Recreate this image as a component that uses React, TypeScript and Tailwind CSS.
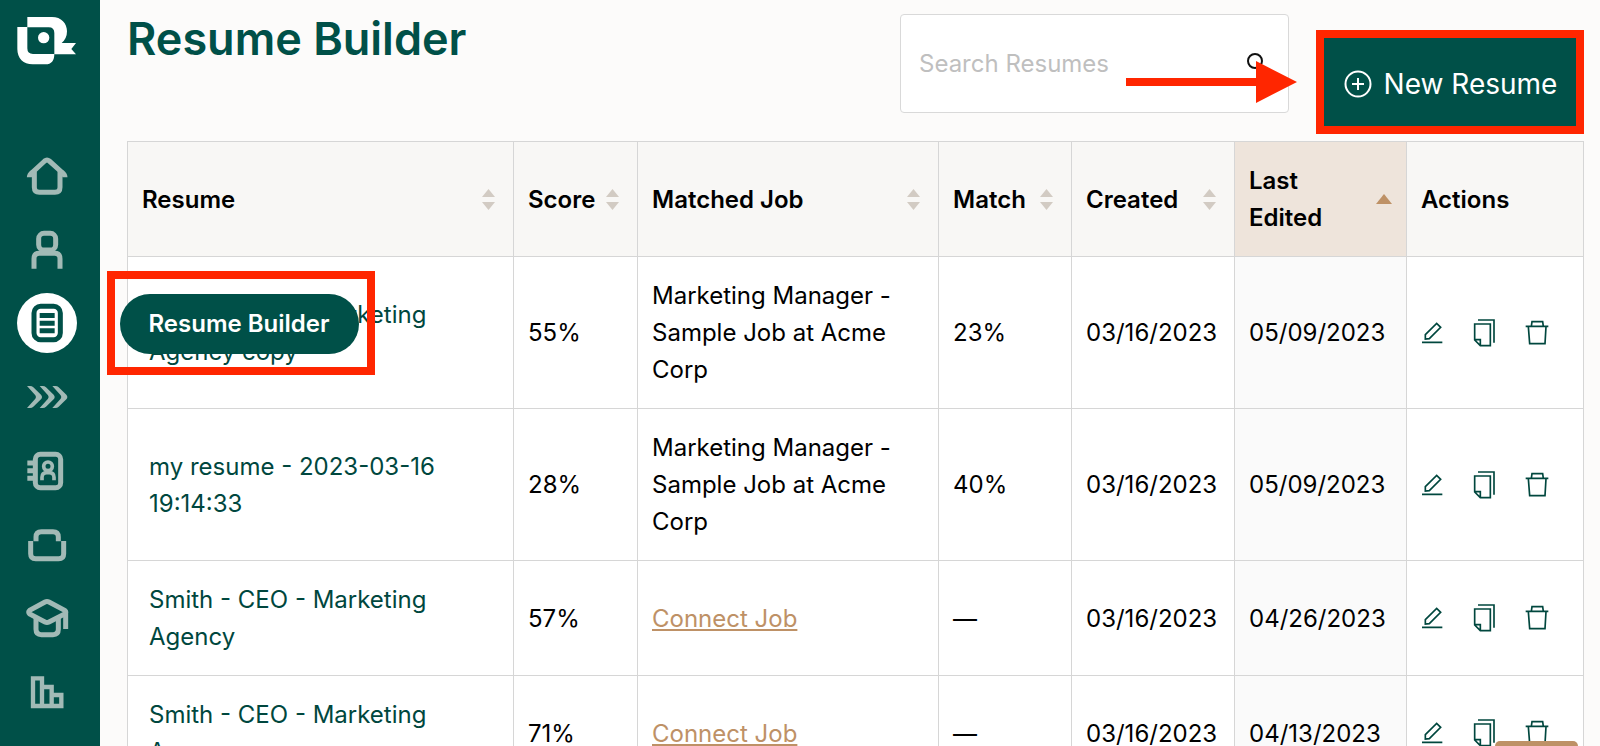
import * as React from "react";
import { clsx } from "clsx";

type Resume = {
  name: string;
  score: string;
  job?: string;
  match: string;
  created: string;
  edited: string;
};

const resumes: Resume[] = [
  {
    name: "Smith - CEO - Marketing Agency copy",
    score: "55%",
    job: "Marketing Manager - Sample Job at Acme Corp",
    match: "23%",
    created: "03/16/2023",
    edited: "05/09/2023",
  },
  {
    name: "my resume - 2023-03-16 19:14:33",
    score: "28%",
    job: "Marketing Manager - Sample Job at Acme Corp",
    match: "40%",
    created: "03/16/2023",
    edited: "05/09/2023",
  },
  {
    name: "Smith - CEO - Marketing Agency",
    score: "57%",
    match: "—",
    created: "03/16/2023",
    edited: "04/26/2023",
  },
  {
    name: "Smith - CEO - Marketing Agency",
    score: "71%",
    match: "—",
    created: "03/16/2023",
    edited: "04/13/2023",
  },
];

const columns = [
  { label: "Resume", width: "", sortable: true },
  { label: "Score", width: "w-[124px]", sortable: true },
  { label: "Matched Job", width: "w-[301px]", sortable: true },
  { label: "Match", width: "w-[133px]", sortable: true },
  { label: "Created", width: "w-[163px]", sortable: true },
  { label: "Last Edited", width: "w-[172px]", sortable: true, sorted: true },
  { label: "Actions", width: "w-[177px]", sortable: false },
];

const navItems = [
  {
    label: "Home",
    viewBox: "74 72 132 132",
    icon: (
      <>
        <path d="M87 142C87 134 92 130 97 126L133 93Q140 87 147 93L184 126C189 130 194 134 194 142" />
        <path d="M102 124V172Q102 187 117 187H164Q179 187 179 172V124" />
      </>
    ),
  },
  {
    label: "Profile",
    viewBox: "74 294 132 132",
    icon: (
      <>
        <rect x="115" y="310" width="51" height="50" rx="16" />
        <path d="M101 416V386Q101 370 117 370H163Q179 370 179 386V416" />
      </>
    ),
  },
  {
    label: "Resume Builder",
    viewBox: "74 517 132 132",
    active: true,
    icon: (
      <>
        <rect x="101" y="533" width="79" height="100" rx="20" />
        <path d="M118 560.500H163M118 583.500H163M118 606.500H163" />
      </>
    ),
  },
  {
    label: "Job Tracker",
    viewBox: "74 738 132 132",
    icon: (
      <g fill="currentColor" stroke="none">
        <path d="M80 771H89Q95 771 99 775L122 797Q128 804 122 811L99 833Q95 837 89 837H80L105 809Q109 804 105 799Z" />
        <path d="M118 771H127Q133 771 137 775L160 797Q166 804 160 811L137 833Q133 837 127 837H118L143 809Q147 804 143 799Z" />
        <path d="M156 771H165Q171 771 175 775L198 797Q204 804 198 811L175 833Q171 837 165 837H156L181 809Q185 804 181 799Z" />
      </g>
    ),
  },
  {
    label: "Contacts",
    viewBox: "74 59 132 132",
    icon: (
      <>
        <rect x="105" y="75" width="76" height="100" rx="15" />
        <path d="M81 101H98M81 124H98M81 147H98" />
        <circle cx="143" cy="111" r="13" strokeWidth="11" />
        <path d="M125 153V144Q125 130 139 130H147Q161 130 161 144V153" strokeWidth="11" />
      </>
    ),
  },
  {
    label: "Companies",
    viewBox: "74 276 132 132",
    icon: (
      <>
        <path d="M107 331V318Q107 302 123 302H158Q174 302 174 318V331" />
        <path d="M91 330V368Q91 383 106 383H175Q190 383 190 368V330" />
      </>
    ),
  },
  {
    label: "Courses",
    viewBox: "74 498 132 132",
    icon: (
      <>
        <path d="M134 516Q140 513 146 516L193 541Q200 546 193 552L146 576Q140 579 134 576L88 552Q82 546 88 541Z" />
        <path d="M196 547V597" />
        <path d="M107 562V598Q107 614 123 614H158Q174 614 174 598V562" />
      </>
    ),
  },
  {
    label: "Statistics",
    viewBox: "74 721 132 132",
    icon: (
      <path
        d="M98 746H125V829H98ZM125 772H154V829H125M154 796H183V829H154"
        strokeWidth="13"
      />
    ),
  },
];

function Logo() {
  return (
    <svg viewBox="51 46 180 150" className="h-[50px] w-[60px]" fill="#fff">
      <path d="M82 49H156C184 49 201 68 201 92C201 108 195 119 185 127H228L214 145L228 161H163V97Q163 80 146 80H82Z" />
      <path d="M52 79H82V143Q82 160 99 160H163C163 180 154 191 137 191H98C70 191 52 173 52 145Z" />
      <circle cx="131" cy="111" r="17" />
    </svg>
  );
}

function Sidebar() {
  return (
    <aside className="relative z-10 flex w-[100px] shrink-0 flex-col bg-[#005048] pr-[7px]">
      <a href="#" aria-label="Teal" className="mt-4 flex justify-center">
        <Logo />
      </a>
      <nav className="mt-20 flex h-[576px] shrink-0 flex-col items-center justify-between">
        {navItems.map((item) => (
          <a
            key={item.label}
            href="#"
            aria-label={item.label}
            className={clsx(
              "relative flex size-[60px] items-center justify-center rounded-full",
              item.active ? "bg-white text-[#005048]" : "text-[#a2bab6]",
            )}
          >
            <svg
              viewBox={item.viewBox}
              className="size-11"
              fill="none"
              stroke="currentColor"
              strokeWidth="15"
            >
              {item.icon}
            </svg>
            {item.active && (
              <span className="absolute top-1/2 left-[90px] flex w-[268px] -translate-y-1/2 border-8 border-[#ff2600] pt-[15px] pb-[13px] pl-[5px]">
                <span className="flex h-[60px] w-[239px] items-center justify-center rounded-full bg-[#005048] text-2xl font-semibold whitespace-nowrap text-white">
                  Resume Builder
                </span>
              </span>
            )}
          </a>
        ))}
      </nav>
    </aside>
  );
}

function SortIcon({ sorted }: { sorted?: boolean }) {
  if (sorted) {
    return (
      <svg viewBox="0 0 16 10" className="h-2.5 w-4 shrink-0" fill="#be9166">
        <path d="M8 0L16 10H0Z" />
      </svg>
    );
  }
  return (
    <svg viewBox="0 0 13 21" className="mr-1 h-[21px] w-[13px] shrink-0" fill="#d2cbc3">
      <path d="M6.500 0L13 8H0ZM0 13H13L6.500 21Z" />
    </svg>
  );
}

function RowActions() {
  return (
    <div className="flex items-center gap-7 text-[#00473e]">
      <button type="button" aria-label="Edit">
        <svg viewBox="665 600 72 72" className="size-6" fill="none" stroke="currentColor" strokeWidth="5">
          <path d="M668 664H729M678 654V641L712 607L724 619L690 653Z" />
        </svg>
      </button>
      <button type="button" aria-label="Duplicate">
        <svg viewBox="820 597 72 84" className="h-7 w-6" fill="none" stroke="currentColor" strokeWidth="5">
          <path d="M825 612H872V677H842L825 660ZM825 659H842V677M835 600H883V668" />
        </svg>
      </button>
      <button type="button" aria-label="Delete">
        <svg viewBox="978 600 72 78" className="h-[26px] w-6" fill="none" stroke="currentColor" strokeWidth="5">
          <path d="M980 619H1048M997 619L999 605H1031L1033 619M988 620L992 671H1038L1041 620" />
        </svg>
      </button>
    </div>
  );
}

function Header() {
  return (
    <header className="flex items-start pt-[14px] pb-3">
      <h1 className="flex-1 text-[45px] leading-[50px] font-semibold text-[#005048]">
        Resume Builder
      </h1>
      <div className="relative">
        <input
          type="search"
          aria-label="Search Resumes"
          placeholder="Search Resumes"
          className="h-[99px] w-[389px] rounded border border-[#d9d9d9] bg-white pr-16 pl-[18px] text-2xl placeholder:text-[#bfbfbf]"
        />
        <svg
          viewBox="0 0 20 20"
          className="absolute top-[39px] right-[22px] size-5"
          fill="none"
          stroke="#111"
          strokeWidth="2"
        >
          <circle cx="8" cy="8" r="7" />
          <path d="M13 13L18 18" />
        </svg>
        <svg
          viewBox="0 0 171 42"
          className="absolute top-[47px] left-[226px] h-[42px] w-[171px]"
          fill="#ff2600"
        >
          <path d="M0 17H130V0L171 21L130 42V25H0Z" />
        </svg>
      </div>
      <div className="relative mt-6 ml-8">
        <button
          type="button"
          className="flex h-[91px] w-[263px] items-center justify-center gap-3 bg-[#005048] pr-1 text-[28px] text-white"
        >
          <svg viewBox="0 0 28 28" className="size-7" fill="none" stroke="currentColor" strokeWidth="2">
            <circle cx="14" cy="14" r="12.500" />
            <path d="M14 8V20M8 14H20" />
          </svg>
          New Resume
        </button>
        <div className="pointer-events-none absolute -top-2 right-0 -bottom-[5px] -left-[5px] border-8 border-[#ff2600]" />
      </div>
    </header>
  );
}

export default function App() {
  return (
    <div className="flex h-screen overflow-hidden bg-[#fcfbfa] font-['Inter',sans-serif] text-black">
      <Sidebar />
      <main className="min-w-0 flex-1 pr-4 pl-[27px]">
        <Header />
        <table className="w-full table-fixed border-collapse text-left text-2xl leading-[37px]">
          <thead>
            <tr className="h-[115px]">
              {columns.map((col) => (
                <th
                  key={col.label}
                  className={clsx(
                    "border border-[#d6d6d6] px-[14px] font-semibold",
                    col.width,
                    col.sorted ? "bg-[#eee4db]" : "bg-[#f8f7f5]",
                  )}
                >
                  <div className="flex items-center justify-between gap-2">
                    {col.label}
                    {col.sortable && <SortIcon sorted={col.sorted} />}
                  </div>
                </th>
              ))}
            </tr>
          </thead>
          <tbody>
            {resumes.map((resume, i) => (
              <tr
                key={i}
                className={clsx(
                  "bg-white [&>td]:border [&>td]:border-[#d6d6d6] [&>td]:px-[14px]",
                  resume.job ? "h-[152px]" : "h-[115px]",
                )}
              >
                <td>
                  <a href="#" className="block pr-10 pl-[7px] text-[#00473e]">
                    {resume.name}
                  </a>
                </td>
                <td>{resume.score}</td>
                <td>
                  {resume.job ?? (
                    <a href="#" className="text-[#be9166] underline">
                      Connect Job
                    </a>
                  )}
                </td>
                <td>{resume.match}</td>
                <td>{resume.created}</td>
                <td className="bg-[#fafafa]">{resume.edited}</td>
                <td>
                  <RowActions />
                </td>
              </tr>
            ))}
          </tbody>
        </table>
      </main>
      <div className="fixed right-[22px] bottom-0 z-20 h-[5px] w-[83px] rounded-t-lg bg-[#be9166]" />
    </div>
  );
}
